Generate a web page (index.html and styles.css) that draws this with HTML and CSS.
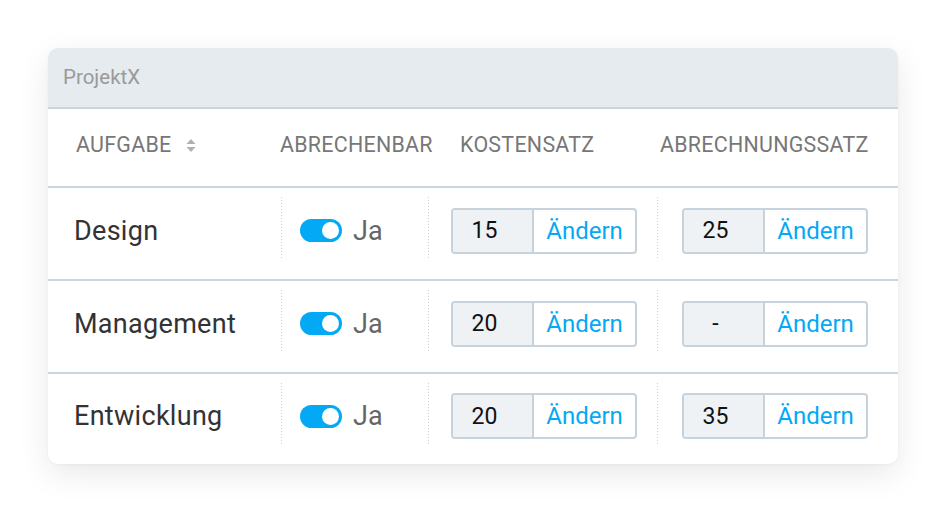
FILE: index.html
```html
<!DOCTYPE html>
<html lang="de">
<head>
<meta charset="utf-8">
<title>ProjektX</title>
<link rel="stylesheet" href="styles.css">
</head>
<body>
<div class="page">
  <div class="card">
    <div class="card-title">ProjektX</div>
    <div class="thead">
      <div class="th th-task">AUFGABE
        <svg class="sort" width="10" height="13" viewBox="0 0 10 13"><path d="M5 0 L9.5 5 H0.5 Z" fill="#b0b0b0"/><path d="M5 13 L9.5 8 H0.5 Z" fill="#b0b0b0"/></svg>
      </div>
      <div class="th th-bill">ABRECHENBAR</div>
      <div class="th th-cost">KOSTENSATZ</div>
      <div class="th th-rate">ABRECHNUNGSSATZ</div>
    </div>

    <div class="row">
      <div class="cell cell-task">Design</div>
      <div class="cell cell-sep cell-bill"><span class="toggle"><span class="knob"></span></span><span class="yes">Ja</span></div>
      <div class="cell cell-sep cell-cost"><div class="group"><span class="val">15</span><span class="btn">Ändern</span></div></div>
      <div class="cell cell-sep cell-rate"><div class="group"><span class="val">25</span><span class="btn">Ändern</span></div></div>
    </div>

    <div class="row">
      <div class="cell cell-task">Management</div>
      <div class="cell cell-sep cell-bill"><span class="toggle"><span class="knob"></span></span><span class="yes">Ja</span></div>
      <div class="cell cell-sep cell-cost"><div class="group"><span class="val">20</span><span class="btn">Ändern</span></div></div>
      <div class="cell cell-sep cell-rate"><div class="group"><span class="val">-</span><span class="btn">Ändern</span></div></div>
    </div>

    <div class="row row-last">
      <div class="cell cell-task">Entwicklung</div>
      <div class="cell cell-sep cell-bill"><span class="toggle"><span class="knob"></span></span><span class="yes">Ja</span></div>
      <div class="cell cell-sep cell-cost"><div class="group"><span class="val">20</span><span class="btn">Ändern</span></div></div>
      <div class="cell cell-sep cell-rate"><div class="group"><span class="val">35</span><span class="btn">Ändern</span></div></div>
    </div>
  </div>
</div>
</body>
</html>
```
FILE: styles.css
```css
* { box-sizing: border-box; }
html, body { margin: 0; padding: 0; background: #ffffff; }
body { font-family: Roboto, "Liberation Sans", sans-serif; }

.page { padding: 48px; }

.card {
  width: 850px;
  background: #ffffff;
  border-radius: 10px;
  overflow: hidden;
  box-shadow: 0 10px 32px rgba(0, 0, 0, 0.09), 0 1px 3px rgba(0, 0, 0, 0.04);
}

.card-title {
  height: 61px;
  padding: 17px 0 0 15px;
  background: #e6ebef;
  border-bottom: 2px solid #c9d6de;
  font-size: 20.5px;
  color: #9a9a9a;
}

.thead, .row {
  display: grid;
  grid-template-columns: 233px 147px 229px 241px;
}

.thead {
  height: 79px;
  border-bottom: 2px solid #c9d6de;
  align-items: center;
}

.th {
  font-size: 21.4px;
  letter-spacing: 0.28px;
  color: #777777;
  padding-bottom: 6px;
  white-space: nowrap;
}
.th-task { padding-left: 28px; display: flex; align-items: center; }
.th-bill { margin-left: -1px; }
.th-cost { padding-left: 32px; }
.th-rate { padding-left: 3px; }

.sort { margin-left: 15px; margin-top: 1px; }

.row {
  height: 93px;
  border-bottom: 2px solid #c9d6de;
}
.row-last { height: 90px; border-bottom: 0; }

.cell {
  display: flex;
  align-items: center;
  margin: 9px 0 20px;
  padding-top: 5px;
}
.cell-sep {
  background-image: linear-gradient(#c7d1d8 34%, transparent 34%);
  background-size: 1px 3px;
  background-repeat: repeat-y;
  background-position: 0 0;
}

.cell-task {
  padding-left: 26px;
  font-size: 27px;
  letter-spacing: 0.3px;
  color: #333333;
}

.cell-bill { padding-left: 19px; }
.toggle {
  position: relative;
  width: 42px;
  height: 23px;
  border-radius: 12px;
  background: #03a9f4;
  flex: none;
}
.knob {
  position: absolute;
  top: 3px;
  right: 3px;
  width: 17px;
  height: 17px;
  border-radius: 50%;
  background: #ffffff;
}
.yes {
  margin-left: 11px;
  font-size: 27px;
  color: #666666;
}

.cell-cost { padding-left: 23px; }
.cell-rate { padding-left: 25px; }

.group {
  display: flex;
  width: 186px;
  height: 46px;
  border: 2px solid #c6d3dc;
  border-radius: 4px;
  overflow: hidden;
}
.val {
  width: 81px;
  border-right: 2px solid #c6d3dc;
  background: #eef2f5;
  display: flex;
  align-items: center;
  justify-content: center;
  padding-right: 16px;
  font-size: 23px;
  color: #111111;
}
.btn {
  flex: 1;
  display: flex;
  align-items: center;
  justify-content: center;
  font-size: 24px;
  color: #03a9f4;
}
```
